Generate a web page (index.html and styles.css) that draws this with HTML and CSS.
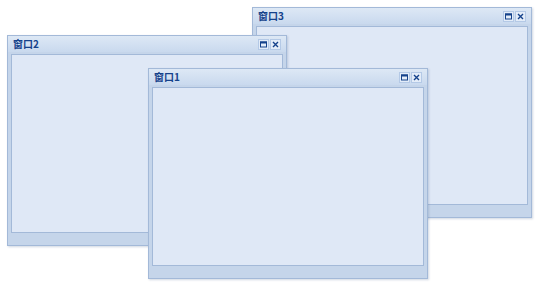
FILE: index.html
```html
<!DOCTYPE html>
<html>
<head>
<meta charset="utf-8">
<link rel="stylesheet" href="styles.css">
</head>
<body>
<div class="desktop">
  <div class="win win3">
    <div class="win-head">
      <span class="win-title">窗口3</span>
      <span class="tools">
        <svg class="tool" viewBox="0 0 9 9" width="9" height="9"><rect x="1.5" y="2" width="6" height="5" fill="none" stroke="#15428b" stroke-width="1"/><rect x="1" y="1.5" width="7" height="2" fill="#15428b"/></svg>
        <svg class="tool" viewBox="0 0 9 9" width="9" height="9"><path d="M2 2 L7 7 M7 2 L2 7" stroke="#15428b" stroke-width="1.4"/></svg>
      </span>
    </div>
    <div class="win-body"></div>
    <div class="win-foot"></div>
  </div>
  <div class="win win2">
    <div class="win-head">
      <span class="win-title">窗口2</span>
      <span class="tools">
        <svg class="tool" viewBox="0 0 9 9" width="9" height="9"><rect x="1.5" y="2" width="6" height="5" fill="none" stroke="#15428b" stroke-width="1"/><rect x="1" y="1.5" width="7" height="2" fill="#15428b"/></svg>
        <svg class="tool" viewBox="0 0 9 9" width="9" height="9"><path d="M2 2 L7 7 M7 2 L2 7" stroke="#15428b" stroke-width="1.4"/></svg>
      </span>
    </div>
    <div class="win-body"></div>
    <div class="win-foot"></div>
  </div>
  <div class="win win1">
    <div class="win-head">
      <span class="win-title">窗口1</span>
      <span class="tools">
        <svg class="tool" viewBox="0 0 9 9" width="9" height="9"><rect x="1.5" y="2" width="6" height="5" fill="none" stroke="#15428b" stroke-width="1"/><rect x="1" y="1.5" width="7" height="2" fill="#15428b"/></svg>
        <svg class="tool" viewBox="0 0 9 9" width="9" height="9"><path d="M2 2 L7 7 M7 2 L2 7" stroke="#15428b" stroke-width="1.4"/></svg>
      </span>
    </div>
    <div class="win-body"></div>
    <div class="win-foot"></div>
  </div>
</div>
</body>
</html>
```
FILE: styles.css
```css
html, body {
  margin: 0;
  padding: 0;
  background: #ffffff;
}
.desktop {
  position: relative;
  width: 554px;
  height: 296px;
  overflow: hidden;
}
.win {
  position: absolute;
  width: 272px;
  height: 209px;
  box-sizing: content-box;
  border: 1px solid #a3b9d8;
  background: #c5d5ea;
  padding: 0 3px;
  display: flex;
  flex-direction: column;
  box-shadow: 1px 1px 2px rgba(120, 140, 170, 0.35);
}
.win1 { left: 148px; top: 68px; }
.win2 { left: 7px; top: 35px; }
.win3 { left: 252px; top: 7px; }
.win-head {
  height: 16px;
  margin: 0 -3px;
  padding: 0 6px 0 5px;
  background: linear-gradient(#dde8f5, #c9d9ee);
  display: flex;
  align-items: center;
  justify-content: space-between;
}
.win-title {
  font-family: "Noto Sans CJK SC", "DejaVu Sans", sans-serif;
  font-weight: bold;
  font-size: 10px;
  color: #15428b;
  line-height: 12px;
}
.tools {
  display: flex;
  gap: 3px;
  align-items: center;
}
.tool {
  display: block;
  background: #e3ecf8;
  outline: 1px solid #b4c9e6;
}
.win-body {
  flex: 1;
  margin-top: 2px;
  border: 1px solid #a3b9d8;
  background: #dfe8f6;
}
.win-foot {
  height: 12px;
}
```
